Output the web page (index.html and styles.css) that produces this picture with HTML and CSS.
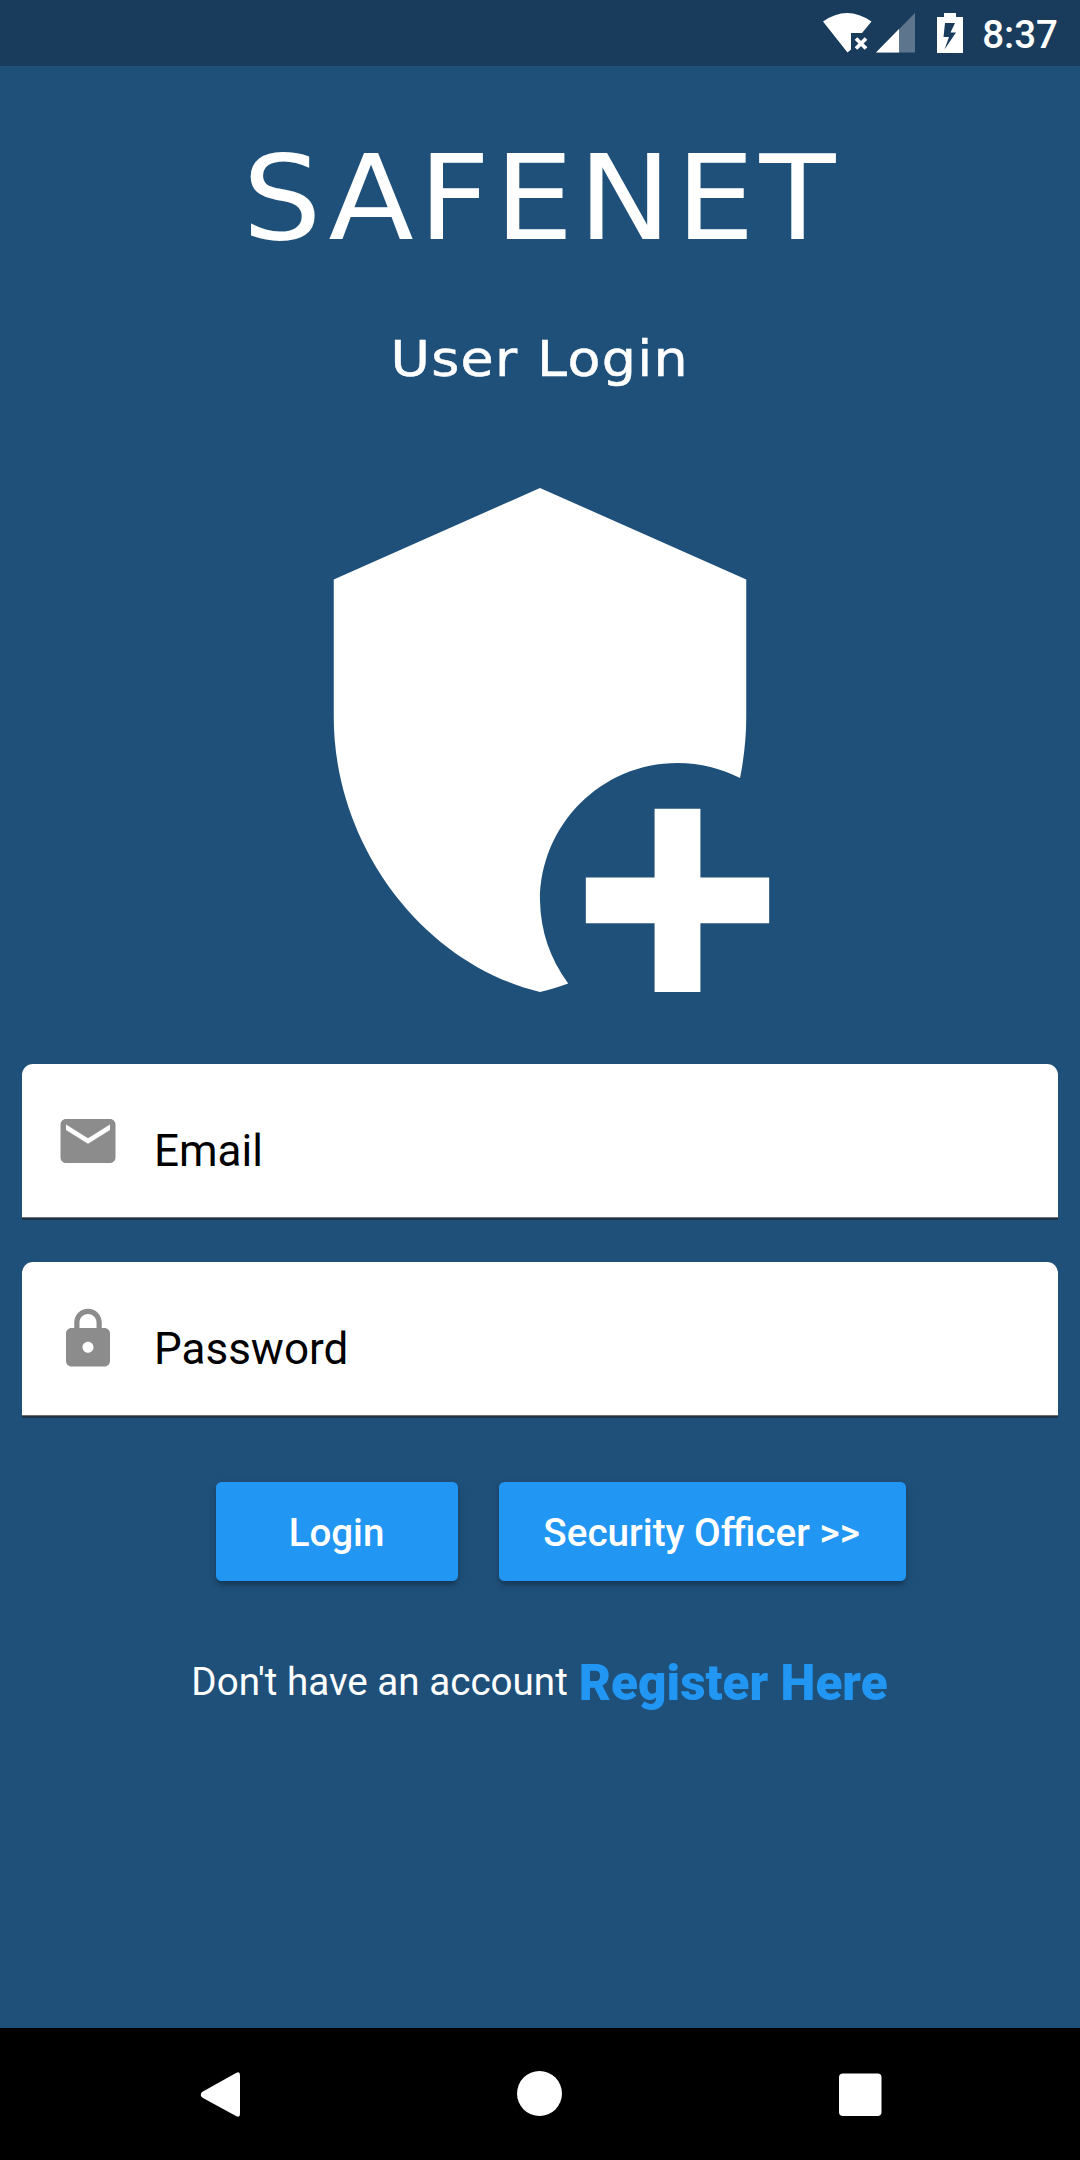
FILE: index.html
```html
<!DOCTYPE html>
<html lang="en">
<head>
<meta charset="utf-8">
<title>Safenet</title>
<link rel="stylesheet" href="styles.css">
</head>
<body>
<header class="status">
  <svg class="wifi" viewBox="0 0 49 40"><path d="M0 8.500Q24 -8.500 48.500 8.500L39 20H28V36.500L24.500 39.500Z"/><path class="cross" d="M33 25.500l10 10M43 25.500l-10 10"/></svg>
  <svg class="signal" viewBox="0 0 40 40"><path class="dim" d="M0 39.500L39 0v39.500z"/><path d="M0 39.500L23 16v23.500z"/></svg>
  <svg class="battery" viewBox="0 0 26 40"><path fill-rule="evenodd" d="M7 0h12v4h7v36H0V4h7zM8 10L6.500 24H12L7.500 36.500L19 19.500h-5.500L18 10z"/></svg>
  <span class="clock">8:37</span>
</header>
<main class="screen">
  <h1 class="brand">SAFENET</h1>
  <h2 class="subtitle">User Login</h2>
  <svg class="shield" viewBox="0 0 24 24"><path d="M12 1L3 5v6c0 5.550 3.840 10.740 9 12 .41-.1.81-.24 1.230-.380A6.300 6.300 0 0 1 12 19c0-3.310 2.690-6 6-6 1 0 1.930.25 2.730.66.17-.87.270-1.760.270-2.660V5z"/><path d="M17 15h2v3h3v2h-3v3h-2v-3h-3v-2h3z"/></svg>
  <form class="form">
    <label class="field">
      <svg class="icon" viewBox="0 0 24 24"><path d="M20 4H4c-1.100 0-1.990.9-1.990 2L2 18c0 1.100.9 2 2 2h16c1.100 0 2-.9 2-2V6c0-1.100-.9-2-2-2zm0 4l-8 5-8-5V6l8 5 8-5v2z"/></svg>
      <input class="input" type="email" placeholder="Email">
    </label>
    <label class="field">
      <svg class="icon" viewBox="0 0 24 24"><path d="M18 8h-1V6c0-2.760-2.240-5-5-5S7 3.240 7 6v2H6c-1.100 0-2 .9-2 2v10c0 1.100.9 2 2 2h12c1.100 0 2-.9 2-2V10c0-1.100-.9-2-2-2zm-6 9c-1.100 0-2-.9-2-2s.9-2 2-2 2 .9 2 2-.9 2-2 2zm3.100-9H8.900V6c0-1.710 1.390-3.100 3.100-3.100 1.710 0 3.100 1.390 3.100 3.100v2z"/></svg>
      <input class="input" type="password" placeholder="Password">
    </label>
    <div class="actions">
      <button class="button login" type="button">Login</button>
      <button class="button officer" type="button">Security Officer &gt;&gt;</button>
    </div>
  </form>
  <p class="signup"><span>Don't have an account</span><a class="register">Register Here</a></p>
</main>
<nav class="navbar">
  <svg class="nav-icon" viewBox="0 0 66 66"><path d="M15 31L49 12Q53 10 53 14V53Q53 57 49 55L16 37Q12 34.500 15 31Z"/></svg>
  <svg class="nav-icon" viewBox="0 0 66 66"><circle cx="32.500" cy="32.500" r="22.500"/></svg>
  <svg class="nav-icon" viewBox="0 0 66 66"><rect x="12" y="12.500" width="42.500" height="42.500" rx="4"/></svg>
</nav>
</body>
</html>
```

FILE: styles.css
```css
* { box-sizing: border-box; }
body {
  margin: 0;
  width: 1080px;
  height: 2160px;
  display: flex;
  flex-direction: column;
  overflow: hidden;
  background: #1f507a;
  color: #fff;
  font-family: Roboto, "Liberation Sans", sans-serif;
}
svg { display: block; fill: currentColor; flex: none; }
.status {
  height: 66px;
  flex: none;
  display: flex;
  align-items: flex-start;
  padding: 13px 22px 0 0;
  justify-content: flex-end;
  background: #193c5c;
}
.wifi { width: 49px; height: 40px; margin-right: 4px; }
.cross { fill: none; stroke: currentColor; stroke-width: 3.800; }
.signal { width: 40px; height: 40px; margin-right: 21px; }
.dim { opacity: .3; }
.battery { width: 26px; height: 40px; margin-right: 19px; }
.clock { font-size: 38.500px; font-weight: 500; line-height: 43px; }
.screen { flex: 1; display: flex; flex-direction: column; align-items: center; }
.brand, .subtitle { margin: 0; font-family: "DejaVu Sans", sans-serif; font-weight: 400; white-space: nowrap; }
.brand { margin-top: 62px; font-size: 118px; line-height: 140px; letter-spacing: 4.500px; padding-left: 3px; transform: scaleX(1.055); }
.subtitle { margin-top: 57px; font-size: 49px; line-height: 70px; letter-spacing: 1.200px; transform: scaleX(1.100); -webkit-text-stroke: .5px #fff; }
.shield { width: 550px; height: 550px; margin-top: 69.500px; }
.form { width: 1036px; margin-top: 49.500px; }
.field {
  display: flex;
  height: 156px;
  margin-bottom: 42px;
  padding: 44px 33px 0;
  background: #fff;
  border-radius: 11px 11px 0 0;
  border-bottom: 2px solid #203448;
  box-shadow: inset 0 -1px #6e6e6e;
}
.icon { width: 66px; height: 66px; color: #8c8c8c; }
.input {
  flex: 1;
  height: 52px;
  margin: 17px 0 0 33px;
  padding: 0;
  border: 0;
  outline: 0;
  background: transparent;
  font: 400 44px/52px Roboto, "Liberation Sans", sans-serif;
}
.input::placeholder { color: #000; opacity: 1; }
.actions { display: flex; gap: 41.500px; margin: 64px 0 0 193.500px; }
.button {
  height: 99px;
  padding: 2px 0 0;
  border: 0;
  border-radius: 5.500px;
  background: #2196f3;
  color: #fff;
  font: 500 38.500px/45px Roboto, "Liberation Sans", sans-serif;
  box-shadow: 0 5px 5px -2px rgba(0,0,0,.25), 0 3px 8px rgba(0,0,0,.16);
}
.login { width: 242px; }
.officer { width: 407px; padding-right: 2px; font-size: 38.700px; }
.signup { margin: 70px 0 0; display: flex; align-items: center; gap: 11px; font-size: 38.600px; line-height: 60px; white-space: nowrap; padding-right: 1px; }
.register { color: #2196f3; font-size: 49.500px; font-weight: 900; padding-top: 2px; }
.navbar {
  height: 132px;
  flex: none;
  display: flex;
  justify-content: space-between;
  padding: 33px 187px;
  background: #000;
}
.nav-icon { width: 66px; height: 66px; }
```
